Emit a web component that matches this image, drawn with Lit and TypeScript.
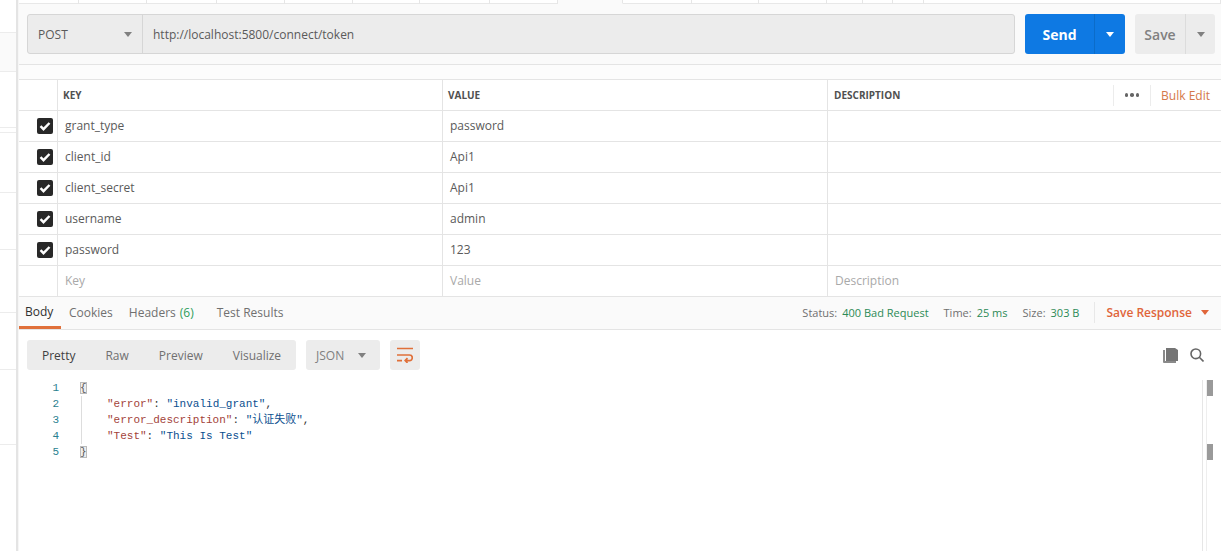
import { LitElement, html, css } from "lit";
import { customElement } from "lit/decorators.js";

const caret = (c: string, w = 8, h = 5) => html`<svg class="caret" width=${w} height=${h} viewBox="0 0 9 5" preserveAspectRatio="none"><path d="M0 0h9L4.5 5z" fill=${c}/></svg>`;

const rows = [
  ["grant_type", "password"],
  ["client_id", "Api1"],
  ["client_secret", "Api1"],
  ["username", "admin"],
  ["password", "123"],
];
const tabWidths = [60, 68, 70, 68, 68, 67, 70, 68, 66, 69, 67, 68, 36, 30, 31, 297];
const railRows = [33, 39, 56, 5, 60, 57, 63, 57, 75];

@customElement("app-root")
export class AppRoot extends LitElement {
  static styles = css`
    :host { display: block; width: 1221px; height: 551px; overflow: hidden; background: #fff; font-family: "Open Sans", "Noto Sans", sans-serif; font-size: 12px; color: #5a5a5a; }
    .page { display: grid; grid-template-columns: 16px 3px 1fr; height: 551px; }
    .rail { display: flex; flex-direction: column; }
    .rail div { border-bottom: 1px solid #ececec; box-sizing: border-box; }
    .rail div:nth-child(2) { background: #fafafa; }
    .rule { background: #e4e4e4; border-right: 1px solid #f6f6f6; }
    .main { display: flex; flex-direction: column; min-width: 0; height: 551px; overflow: hidden; }

    .tabs { display: flex; height: 4px; box-sizing: border-box; border-bottom: 1px solid #e8e8e8; flex: none; }
    .tabs span { box-sizing: border-box; border-right: 1px solid #e6e6e6; height: 4px; }
    .tabs span.active { background: #fafafa; border-bottom: 1px solid #fafafa; }

    .reqbar { display: flex; align-items: stretch; height: 40px; padding: 10px 6px 10px 8px; background: #fafafa; flex: none; border-bottom: 1px solid #e4e4e4; }
    .urlbox { flex: none; width: 988px; display: flex; background: #ececec; border: 1px solid #d6d6d6; border-radius: 3px; box-sizing: border-box; color: #5a5a5a; }
    .method { width: 115px; box-sizing: border-box; border-right: 1px solid #d6d6d6; display: flex; align-items: center; justify-content: space-between; padding: 0 10px 0 10px; }
    .url { padding-left: 10px; display: flex; align-items: center; }
    .send { margin-left: 10px; width: 100px; display: flex; background: #0e79e3; border-radius: 3px; color: #fff; font-weight: 700; font-size: 14px; }
    .send .lbl { width: 69px; border-right: 1px solid #0b6cc9; display: flex; align-items: center; justify-content: center; }
    .send .dd { flex: 1; display: flex; align-items: center; justify-content: center; }
    .save { margin-left: 10px; width: 80px; display: flex; background: #ececec; border-radius: 3px; color: #808080; font-weight: 600; font-size: 14px; }
    .save .lbl { width: 50px; border-right: 1px solid #dcdcdc; display: flex; align-items: center; justify-content: center; }
    .save .dd { flex: 1; display: flex; align-items: center; justify-content: center; }

    .subgap { height: 14px; background: #fcfcfc; flex: none; }

    .grid { display: grid; grid-template-columns: 39px 385px 385px 1fr; border-top: 1px solid #e4e4e4; flex: none; }
    .cell { height: 31px; box-sizing: border-box; border-bottom: 1px solid #e4e4e4; border-right: 1px solid #e4e4e4; display: flex; align-items: center; padding: 0 0 2px 7px; }
    .cell.last { border-right: 0; }
    .cell.check { padding: 0 0 0 18px; }
    .cell.head { font-size: 10px; font-weight: 700; color: #505050; padding: 0 0 0 5px; }
    .cell.head.d { padding: 0 11px 0 6px; justify-content: space-between; }
    .cell.ph { color: #a9a9a9; }
    .hact { display: flex; align-items: center; font-weight: 400; }
    .dots { display: flex; gap: 2px; width: 38px; height: 21px; box-sizing: border-box; align-items: center; justify-content: center; border-left: 1px solid #ececec; border-right: 1px solid #ececec; margin-right: 10px; }
    .dots i { width: 3.5px; height: 3.5px; border-radius: 50%; background: #666; }
    .bulk { color: #d4784a; font-size: 12px; }

    .restabs { display: flex; justify-content: space-between; height: 33px; box-sizing: border-box; background: #fafafa; border-bottom: 1px solid #e4e4e4; flex: none; }
    .rleft { display: flex; margin-left: -2px; }
    .rtab { padding: 0 8px 2px; display: flex; align-items: center; color: #707070; height: 32px; box-sizing: border-box; }
    .rtab.on { color: #303030; padding: 0 9px 0 8px; border-bottom: 3px solid #e0703a; width: 44px; }
    .rtab .n { color: #2e9e5b; margin-left: 4px; }
    .rtab.tr { margin-left: 7px; }
    .rright { display: flex; align-items: center; font-size: 11px; color: #707070; padding: 0 12px 2px 0; }
    .rright b { font-weight: 400; color: #2c8a56; margin-left: 5px; margin-right: 15px; }
    .rright b.l { margin-right: 15px; }
    .saver { border-left: 1px solid #e8e8e8; height: 21px; display: flex; align-items: center; gap: 9px; padding-left: 11px; color: #e0653a; font-weight: 600; font-size: 12px; }

    .tools { display: flex; align-items: center; height: 50px; padding: 0 17px 0 8px; flex: none; box-sizing: border-box; }
    .seg { display: flex; width: 269px; height: 30px; background: #ececec; border-radius: 3px; align-items: center; box-sizing: border-box; padding-left: 15px; color: #707070; }
    .seg span { margin-right: 30px; }
    .seg span.on { color: #404040; }
    .json { margin-left: 10px; width: 74px; height: 30px; background: #ececec; border-radius: 3px; display: flex; align-items: center; justify-content: space-between; padding: 0 14px 0 10px; box-sizing: border-box; color: #808080; }
    .wrap { margin-left: 10px; width: 30px; height: 30px; background: #ececec; border-radius: 3px; display: flex; align-items: center; justify-content: center; }
    .rtools { margin-left: auto; display: flex; align-items: center; gap: 12px; }

    .editor { flex: 1; display: grid; grid-template-columns: 40px 1fr 19px; min-height: 0; }
    .nums, .code { font-family: "Liberation Mono", "Noto Sans CJK SC", monospace; font-size: 11px; line-height: 16px; }
    .nums { text-align: right; color: #2a7f8f; }
    .code { padding-left: 21px; white-space: pre; }
    .line { height: 16px; display: block; }
    .k { color: #a3433a; }
    .s { color: #0b4f8f; }
    .p { color: #333; }
    .br { outline: 1px solid #bbb; outline-offset: -1px; background: #eee; }
    .in { border-left: 1px solid #ddd; margin-left: 1px; padding-left: 25px; }
    .scroll { border-left: 1px solid #e6e6e6; display: flex; padding-left: 3px; }
    .track { border-left: 1px solid #eeeeee; flex: 1; }
    .track i { display: block; width: 6px; height: 16px; background: #9a9a9a; }
    .track i + i { margin-top: 48px; }
  `;

  private row(k: string, v: string) {
    return html`
      <div class="cell check">
        <svg width="16" height="16" viewBox="0 0 16 16"><rect width="16" height="16" rx="2" fill="#282828"/><path d="M3.5 8.2l3 3 6-6.2" fill="none" stroke="#fff" stroke-width="2.4"/></svg>
      </div>
      <div class="cell">${k}</div>
      <div class="cell">${v}</div>
      <div class="cell last"></div>`;
  }

  render() {
    return html`
      <div class="page">
        <div class="rail">${railRows.map((h) => html`<div style="height:${h}px"></div>`)}</div>
        <div class="rule"></div>
        <div class="main">
          <div class="tabs">${tabWidths.map((w, i) => html`<span class=${i === 8 ? "active" : ""} style="width:${w}px"></span>`)}</div>
          <div class="reqbar">
            <div class="urlbox">
              <div class="method"><span>POST</span>${caret("#808080")}</div>
              <div class="url">http://localhost:5800/connect/token</div>
            </div>
            <div class="send"><div class="lbl">Send</div><div class="dd">${caret("#fff")}</div></div>
            <div class="save"><div class="lbl">Save</div><div class="dd">${caret("#808080")}</div></div>
          </div>
          <div class="subgap"></div>
          <div class="grid">
            <div class="cell head"></div>
            <div class="cell head">KEY</div>
            <div class="cell head">VALUE</div>
            <div class="cell head d last">
              <span>DESCRIPTION</span>
              <span class="hact"><span class="dots"><i></i><i></i><i></i></span><span class="bulk">Bulk Edit</span></span>
            </div>
            ${rows.map(([k, v]) => this.row(k, v))}
            <div class="cell"></div>
            <div class="cell ph">Key</div>
            <div class="cell ph">Value</div>
            <div class="cell ph last">Description</div>
          </div>
          <div class="restabs">
            <div class="rleft">
              <div class="rtab on">Body</div>
              <div class="rtab">Cookies</div>
              <div class="rtab">Headers<span class="n">(6)</span></div>
              <div class="rtab tr">Test Results</div>
            </div>
            <div class="rright">
              <span>Status:</span><b>400 Bad Request</b>
              <span>Time:</span><b>25 ms</b>
              <span>Size:</span><b class="l">303 B</b>
              <div class="saver"><span>Save Response</span>${caret("#e0653a", 8, 5)}</div>
            </div>
          </div>
          <div class="tools">
            <div class="seg"><span class="on">Pretty</span><span>Raw</span><span>Preview</span><span>Visualize</span></div>
            <div class="json"><span>JSON</span>${caret("#808080")}</div>
            <div class="wrap">
              <svg width="16" height="16" viewBox="0 0 16 16" fill="none" stroke="#e0703a" stroke-width="1.7">
                <path d="M0 1.5h16M0 8h12.5a2.6 2.6 0 0 1 0 5.6H8.5M0 13.6h5M10.5 11.2L8.2 13.6l2.3 2.3"/>
              </svg>
            </div>
            <div class="rtools">
              <svg width="15" height="15" viewBox="0 0 15 15"><path d="M0 2h2v11h11v2H1a1 1 0 0 1-1-1z" fill="#8a8a8a"/><path d="M3 0h9l3 2v11H3z" fill="#757575"/></svg>
              <svg width="14" height="14" viewBox="0 0 14 14" fill="none" stroke="#666" stroke-width="1.6"><circle cx="5.8" cy="5.8" r="4.8"/><path d="M9.3 9.3l4.2 4.2"/></svg>
            </div>
          </div>
          <div class="editor">
            <div class="nums">${[1, 2, 3, 4, 5].map((n) => html`<span class="line">${n}</span>`)}</div>
            <div class="code"><span class="line"><span class="br">{</span></span><span class="line in"><span class="k">"error"</span><span class="p">: </span><span class="s">"invalid_grant"</span><span class="p">,</span></span><span class="line in"><span class="k">"error_description"</span><span class="p">: </span><span class="s">"认证失败"</span><span class="p">,</span></span><span class="line in"><span class="k">"Test"</span><span class="p">: </span><span class="s">"This Is Test"</span></span><span class="line"><span class="br">}</span></span></div>
            <div class="scroll"><div class="track"><i></i><i></i></div></div>
          </div>
        </div>
      </div>`;
  }
}
